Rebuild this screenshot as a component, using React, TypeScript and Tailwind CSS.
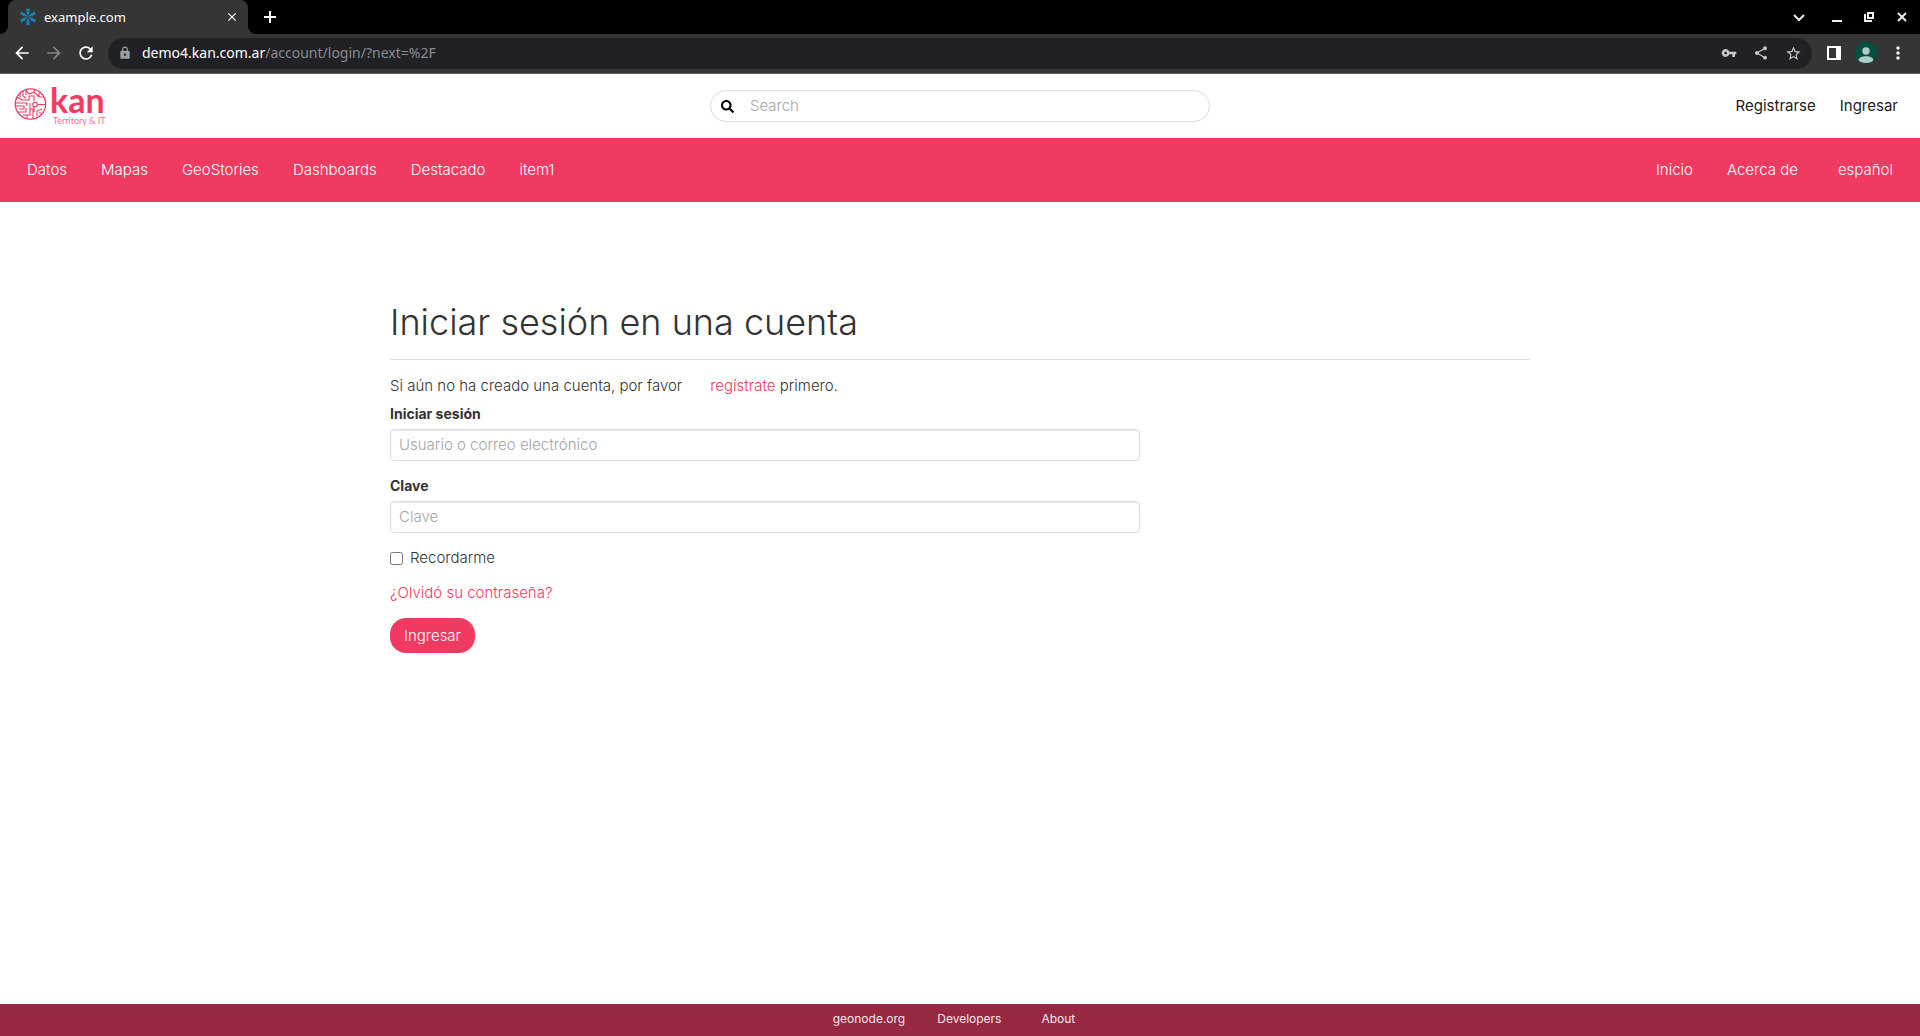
import type { ReactNode } from "react";
import {
  MdArrowBack,
  MdArrowForward,
  MdRefresh,
  MdLock,
  MdVpnKey,
  MdShare,
  MdStarBorder,
  MdMoreVert,
  MdClose,
} from "react-icons/md";
import { FaSearch } from "react-icons/fa";

const mainLinks = ["Datos", "Mapas", "GeoStories", "Dashboards", "Destacado", "item1"];

function ChromeButton({ label, className = "", children }: { label: string; className?: string; children: ReactNode }) {
  return (
    <button type="button" aria-label={label} className={`flex shrink-0 items-center justify-center ${className}`}>
      {children}
    </button>
  );
}

function Favicon() {
  return (
    <svg viewBox="0 0 18 18" className="size-[18px] shrink-0" aria-hidden="true">
      {[0, 60, 120, 180, 240, 300].map((a) => (
        <g key={a} transform={`rotate(${a} 9 9)`}>
          <path d="M9 8.500 7.500 5 7.300 0.800H10.700L10.500 5Z" fill="#1a7fb0" />
        </g>
      ))}
      <circle cx="9" cy="9" r="1.3" fill="#3f5560" />
    </svg>
  );
}

function TabStrip() {
  return (
    <div className="flex h-[34px] items-stretch bg-black text-white">
      <div className="relative ml-2 flex w-60 items-center rounded-t-lg bg-[#353535] pl-[11px] pr-2">
        <Favicon />
        <span className="ml-[7px] flex-1 text-[13px] leading-5">example.com</span>
        <ChromeButton label="Cerrar pestaña" className="size-4">
          <MdClose size={14} />
        </ChromeButton>
        <svg viewBox="0 0 8 8" className="absolute bottom-0 -left-2 size-2" aria-hidden="true">
          <path d="M8 0V8H0A8 8 0 0 0 8 0Z" fill="#353535" />
        </svg>
        <svg viewBox="0 0 8 8" className="absolute -right-2 bottom-0 size-2" aria-hidden="true">
          <path d="M0 0V8H8A8 8 0 0 1 0 0Z" fill="#353535" />
        </svg>
      </div>
      <ChromeButton label="Nueva pestaña" className="ml-3 w-5">
        <svg viewBox="0 0 12 12" className="size-3" stroke="currentColor" strokeWidth="2" aria-hidden="true">
          <path d="M6 0V12M0 6H12" />
        </svg>
      </ChromeButton>
      <div className="ml-auto flex items-center pr-[13px] text-[#eeeeee]">
        <ChromeButton label="Buscar pestañas" className="mr-[27px]">
          <svg viewBox="0 0 12 12" className="size-3" fill="none" stroke="currentColor" strokeWidth="2" aria-hidden="true">
            <path d="M1 4 6 9 11 4" />
          </svg>
        </ChromeButton>
        <ChromeButton label="Minimizar" className="mr-[22px]">
          <svg viewBox="0 0 10 12" className="h-3 w-2.5" fill="currentColor" aria-hidden="true">
            <path d="M0 9H10V11H0Z" />
          </svg>
        </ChromeButton>
        <ChromeButton label="Restaurar" className="mr-[23px]">
          <svg viewBox="0 0 10 10" className="size-2.5" aria-hidden="true">
            <path d="M4 1H9V6H4Z" fill="none" stroke="currentColor" strokeWidth="2" />
            <path d="M0 2H2V8H8V10H0Z" fill="currentColor" />
          </svg>
        </ChromeButton>
        <ChromeButton label="Cerrar">
          <svg viewBox="0 0 10 10" className="size-2.5" stroke="currentColor" strokeWidth="2" aria-hidden="true">
            <path d="M1 1 9 9M9 1 1 9" />
          </svg>
        </ChromeButton>
      </div>
    </div>
  );
}

function Toolbar() {
  return (
    <div className="flex h-10 items-center border-b border-[#5a5a5a] bg-[#353535] px-3 pb-px text-white">
      <ChromeButton label="Atrás" className="w-5">
        <MdArrowBack size={20} />
      </ChromeButton>
      <ChromeButton label="Adelante" className="ml-3 w-5 text-[#858585]">
        <MdArrowForward size={20} />
      </ChromeButton>
      <ChromeButton label="Recargar" className="ml-3 w-5">
        <MdRefresh size={20} />
      </ChromeButton>
      <div className="ml-3 flex h-[31px] flex-1 items-center rounded-full bg-[#202124] px-2.5">
        <MdLock size={14} className="shrink-0 text-[#9aa0a6]" aria-hidden="true" />
        <div className="ml-2.5 flex-1 text-sm leading-5 text-[#888b8e]">
          <span className="text-white">demo4.kan.com.ar</span>/account/login/?next=%2F
        </div>
        <div className="flex items-center gap-4 text-[#c4c6c9]">
          <ChromeButton label="Contraseñas">
            <MdVpnKey size={16} />
          </ChromeButton>
          <ChromeButton label="Compartir">
            <MdShare size={16} />
          </ChromeButton>
          <ChromeButton label="Favoritos">
            <MdStarBorder size={17} />
          </ChromeButton>
        </div>
      </div>
      <ChromeButton label="Panel lateral" className="ml-[15px]">
        <svg viewBox="0 0 14 14" className="size-3.5" aria-hidden="true">
          <path d="M0 0H14V14H0ZM2 2V12H9V2Z" fill="currentColor" fillRule="evenodd" />
        </svg>
      </ChromeButton>
      <ChromeButton label="Perfil" className="ml-3.5">
        <svg viewBox="0 0 22 22" className="size-[22px]" aria-hidden="true">
          <circle cx="11" cy="11" r="11" fill="#005043" />
          <circle cx="11" cy="9" r="3.7" fill="#b3cbc7" />
          <path d="M3.600 18.200C3.800 15.600 7 14.200 11 14.200S18.200 15.600 18.400 18.200C16 21.800 6 21.800 3.600 18.200Z" fill="#b3cbc7" />
        </svg>
      </ChromeButton>
      <ChromeButton label="Menú" className="ml-[11px] w-5">
        <MdMoreVert size={20} />
      </ChromeButton>
    </div>
  );
}

function Logo() {
  return (
    <a href="#inicio" aria-label="kan Territory & IT" className="block w-fit">
      <svg viewBox="0 -8 94 58" className="h-[58px] w-[94px]" fill="#f13a62">
        <g fill="none" stroke="#f13a62" strokeWidth="1.1">
          <circle cx="16.500" cy="19" r="15.200" strokeWidth="1.300" />
          <path d="M3 12 8 15H15V11M6 8V12M9 6V11L12 13M12 5V10M12 5 15 9 20 7 21 4M20 7 25 12H29M25 12V8M15 11H20V16M1.500 18H13V21M2 21H10V24H5M16 18V24H19V34M3 27H12V23M16 24V30H9M13 33V30M23 19.500H31M20 22V27M23 31V26L28 24M26 29V27" />
          <circle cx="21" cy="19.500" r="2.300" fill="#fff" />
        </g>
        <text x="36" y="28" fontFamily="Lato, sans-serif" fontSize="34" fontWeight="700">kan</text>
        <text x="39" y="39" fontFamily="Lato, sans-serif" fontSize="9" fontWeight="400" opacity="0.75">Territory &amp; IT</text>
      </svg>
    </a>
  );
}

function Field({ id, label, type, placeholder }: { id: string; label: string; type: string; placeholder: string }) {
  return (
    <div className="mb-[15px] max-w-[750px]">
      <label htmlFor={id} className="mb-[5px] block text-sm leading-5 font-bold">
        {label}
      </label>
      <input
        id={id}
        type={type}
        placeholder={placeholder}
        className="block h-8 w-full rounded-sm border border-[#dddddd] px-2 pb-0.5 text-[15px] leading-5 font-light shadow-[inset_0_1px_1px_rgba(0,0,0,0.075)] placeholder:text-[#a5a5a5]"
      />
    </div>
  );
}

export default function App() {
  return (
    <div className="flex min-h-screen flex-col bg-white font-['Inter',sans-serif] text-[#333333]">
      <div className="font-['Noto_Sans',sans-serif]">
        <TabStrip />
        <Toolbar />
      </div>

      <header>
        <div className="grid h-16 grid-cols-[1fr_500px_1fr] items-center px-3.5">
          <Logo />
          <form role="search" className="flex h-8 items-center rounded-2xl border border-[#dddddd] pl-2.5">
            <button type="button" aria-label="Buscar" className="text-black">
              <FaSearch size={13} />
            </button>
            <input
              type="search"
              aria-label="Search"
              placeholder="Search"
              className="ml-4 flex-1 bg-transparent text-[15px] font-light outline-none placeholder:text-[#a5a5a5]"
            />
          </form>
          <div className="flex justify-end gap-6 pr-2 text-[15px] text-[#1c1c1c]">
            <a href="#registro">Registrarse</a>
            <a href="#ingresar">Ingresar</a>
          </div>
        </div>
        <nav className="flex h-16 items-center justify-between bg-[#f13a62] px-[27px] text-[15px] font-light text-white">
          <div className="flex gap-[34px]">
            {mainLinks.map((name) => (
              <a key={name} href={`#${name.toLowerCase()}`}>
                {name}
              </a>
            ))}
          </div>
          <div className="flex items-center">
            <a href="#inicio" className="mr-[34px]">Inicio</a>
            <a href="#acerca" className="mr-10">Acerca de</a>
            <button type="button">español</button>
          </div>
        </nav>
      </header>

      <main className="mx-auto w-full max-w-[1170px] flex-1 px-[15px] pt-[100px] text-[15px] leading-5">
        <h1 className="border-b border-[#dddddd] pb-[17px] text-4xl leading-10 font-light">Iniciar sesión en una cuenta</h1>
        <p className="mt-4 mb-2 font-light">
          Si aún no ha creado una cuenta, por favor
          <a href="#registro" className="ml-7 text-[#f13a62]">regístrate</a> primero.
        </p>
        <form>
          <Field id="login" label="Iniciar sesión" type="text" placeholder="Usuario o correo electrónico" />
          <Field id="password" label="Clave" type="password" placeholder="Clave" />
          <label className="flex w-fit items-center gap-[7px] font-light">
            <input type="checkbox" className="size-[13px]" />
            Recordarme
          </label>
          <a href="#clave" className="mt-[15px] block w-fit font-light text-[#f13a62]">¿Olvidó su contraseña?</a>
          <button type="button" className="mt-[15px] h-[35px] rounded-2xl bg-[#f13a62] px-3.5 font-light text-white">
            Ingresar
          </button>
        </form>
      </main>

      <footer className="flex h-8 items-center justify-center bg-[#992942] pr-3 pb-0.5 text-xs text-[#f5e6ea]">
        <a href="#geonode" className="mr-8">geonode.org</a>
        <a href="#developers" className="mr-10">Developers</a>
        <a href="#about">About</a>
      </footer>
    </div>
  );
}
